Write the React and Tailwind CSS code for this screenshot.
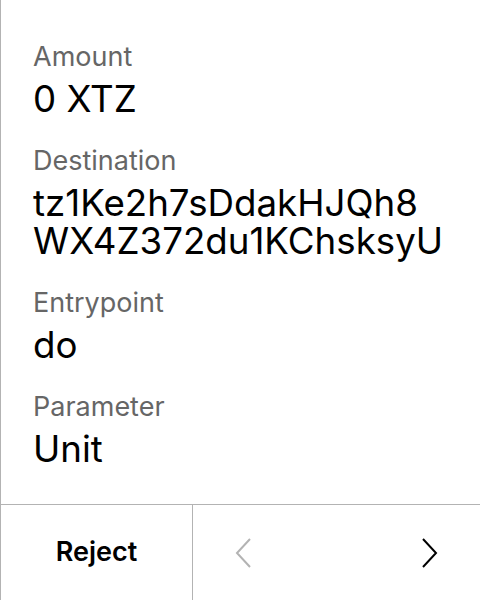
export default function App() {
  const rows = [
    { label: 'Amount', value: ['0 XTZ'] },
    { label: 'Destination', value: ['tz1Ke2h7sDdakHJQh8', 'WX4Z372du1KChsksyU'] },
    { label: 'Entrypoint', value: ['do'] },
    { label: 'Parameter', value: ['Unit'] },
  ];

  return (
    <div className="w-[480px] h-[600px] flex flex-col bg-white border-l border-[#b3b3b3] font-['Inter',sans-serif]">
      <div className="flex-1 flex flex-col gap-[27px] pl-[32px] pt-[41px]">
        {rows.map((row) => (
          <div key={row.label} className="flex flex-col gap-[7px]">
            <div className="text-[27px] leading-[32px] text-[#666666]">{row.label}</div>
            <div className="text-[36.7px] leading-[38px] text-black">
              {row.value.map((line) => (
                <div key={line}>{line}</div>
              ))}
            </div>
          </div>
        ))}
      </div>

      {/* bottom nav */}
      <div className="h-[96px] flex border-t border-[#b3b3b3]">
        <button className="w-[192px] flex items-center justify-center text-[27px] font-semibold text-black border-r border-[#b3b3b3]">
          Reject
        </button>
        <div className="flex-1 flex items-center justify-between px-[42px]">
          <svg width="16" height="30" viewBox="0 0 16 30" fill="none">
            <path d="M15 1 L2 15 L15 29" stroke="#b3b3b3" strokeWidth="2" />
          </svg>
          <svg width="16" height="30" viewBox="0 0 16 30" fill="none">
            <path d="M1 1 L14 15 L1 29" stroke="#000" strokeWidth="2" />
          </svg>
        </div>
      </div>
    </div>
  );
}
